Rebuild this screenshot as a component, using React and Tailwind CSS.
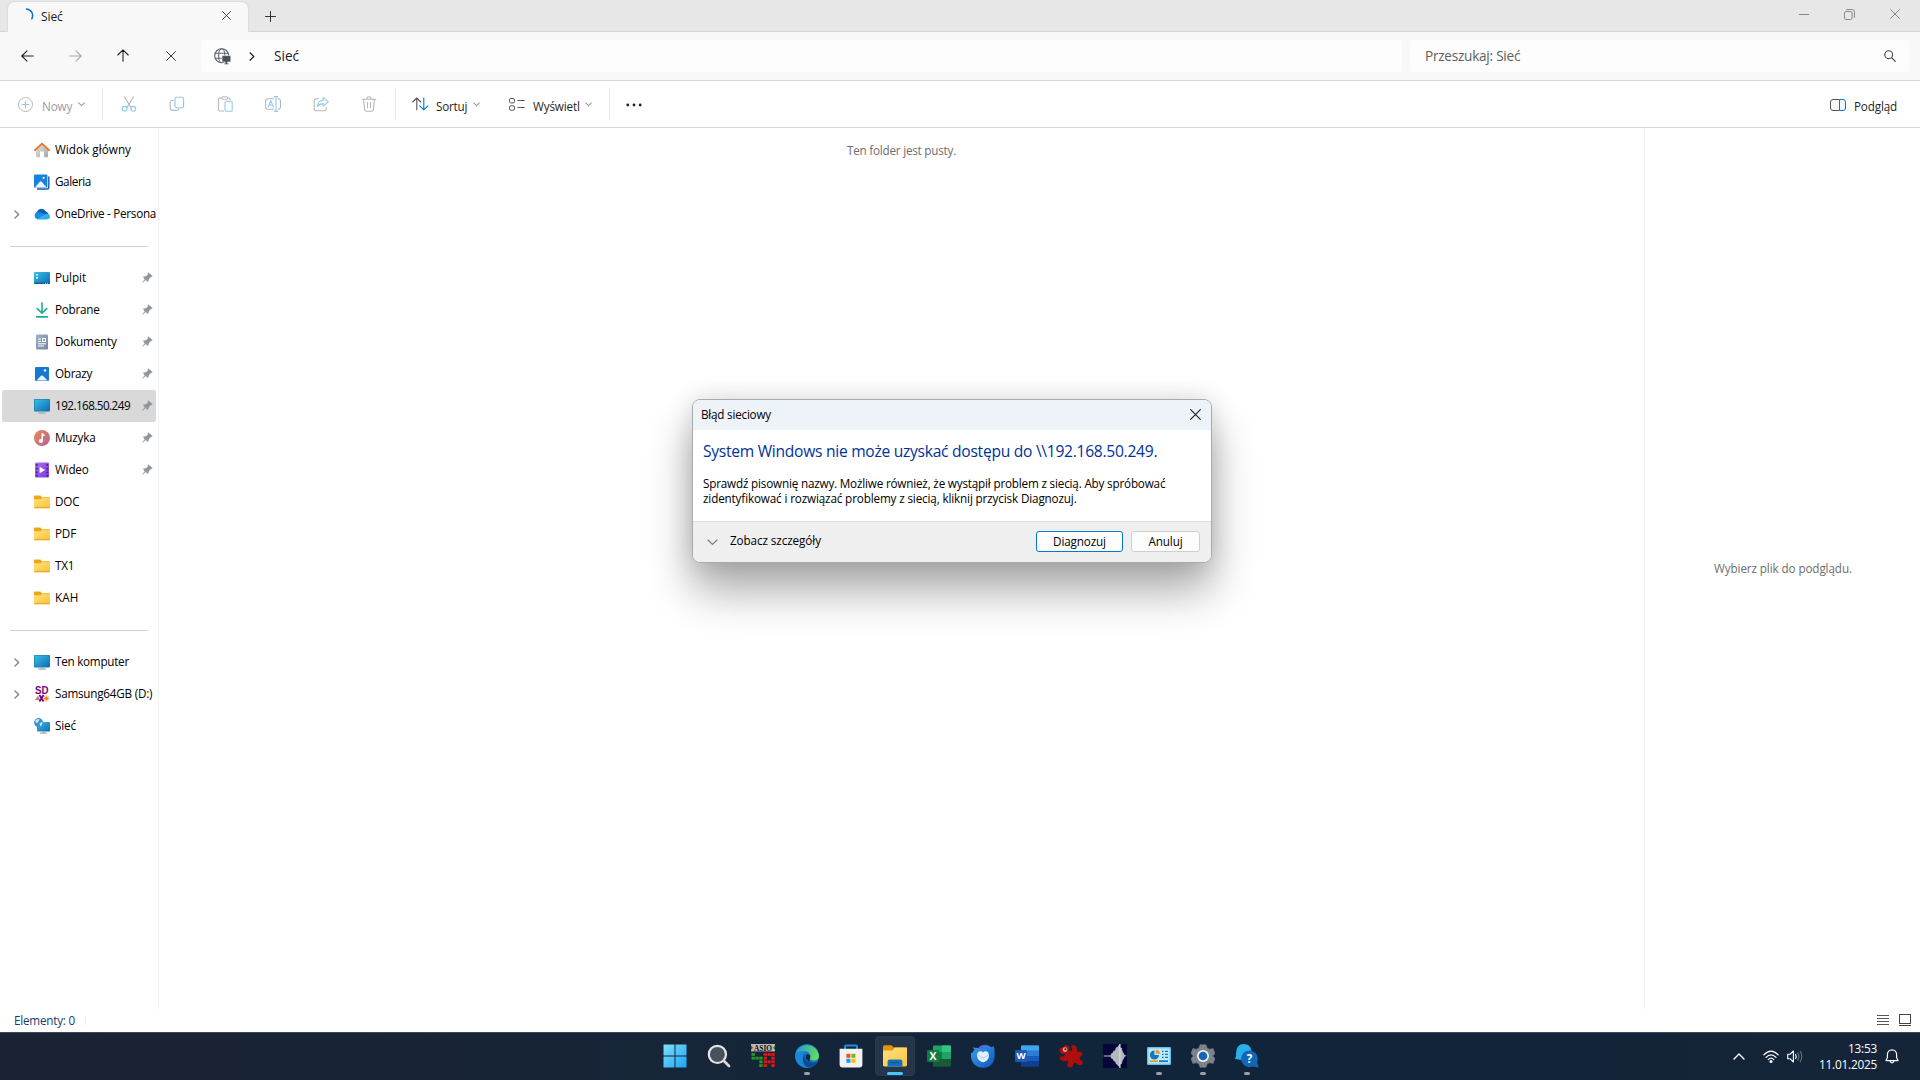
const stroke = { fill: "none", strokeLinecap: "round", strokeLinejoin: "round" };

function Cross({ size = 10, color = "#333", className = "" }) {
  return (
    <svg width={size} height={size} viewBox="0 0 10 10" className={className}>
      <path d="M.6 .6 9.4 9.4M9.4 .6 .6 9.4" stroke={color} strokeWidth="1" {...stroke} />
    </svg>
  );
}

function ChevronDown({ className = "" }) {
  return (
    <svg width="7" height="5" viewBox="0 0 7 5" className={className}>
      <path d="M.7 .9 3.5 3.7 6.3 .9" stroke="#9a9a9a" strokeWidth="1.1" {...stroke} />
    </svg>
  );
}

function TitleBar() {
  return (
    <div className="flex h-8 shrink-0 border-b border-[#d5d5d5] bg-[#e7e7e7]">
      <div className="relative ml-[7px] mt-px flex h-[31px] w-[242px] shrink-0 rounded-t-lg border border-b-0 border-[#dcdcdc] bg-[#f8f8f8]">
        <svg width="9" height="12" viewBox="0 0 9 12" className="ml-[17px] mt-[6px]">
          <path d="M1.5 1C6.5 1.6 9 6.4 6.8 10.8" stroke="#0a6fc2" strokeWidth="1.5" {...stroke} />
        </svg>
        <span className="ml-[7px] mt-[6px] text-[12px] leading-[18px] tracking-[-0.1px] text-[#1a1a1a]">Sieć</span>
        <Cross size={9} className="ml-auto mr-[17px] mt-[9px]" />
      </div>
      <svg width="11" height="11" viewBox="0 0 11 11" className="ml-4 mt-[11px]">
        <path d="M5.5 .5V10.5M.5 5.5H10.5" stroke="#333" strokeWidth="1" {...stroke} />
      </svg>
      <div className="ml-auto mr-[2px] flex h-[29px] items-center">
        <div className="flex w-[45px] justify-center">
          <svg width="10" height="10" viewBox="0 0 10 10"><path d="M0 4.5H10" stroke="#888" /></svg>
        </div>
        <div className="flex w-[46px] justify-center">
          <svg width="11" height="11" viewBox="0 0 11 11" className="mt-[-1px]">
            <rect x=".5" y="2.5" width="7.5" height="8" rx="1.4" fill="none" stroke="#888" />
            <path d="M2.5 .5H8.2Q10.4 .5 10.4 2.8V8.4" stroke="#888" {...stroke} />
          </svg>
        </div>
        <div className="flex w-[46px] justify-center"><Cross size={10} color="#888" className="mt-[-1px]" /></div>
      </div>
    </div>
  );
}

function NavBar() {
  return (
    <div className="flex h-[49px] shrink-0 items-center border-b border-[#d5d5d5] bg-[#f8f8f8] pl-[3px]">
      <div className="mt-[-1px] flex items-center">
        <div className="flex w-12 justify-center">
          <svg width="13" height="12" viewBox="0 0 13 12"><path d="M12.3 6H.8M6 .8.8 6 6 11.2" stroke="#222" strokeWidth="1.1" {...stroke} /></svg>
        </div>
        <div className="flex w-12 justify-center">
          <svg width="13" height="12" viewBox="0 0 13 12"><path d="M.7 6H12.2M7 .8 12.2 6 7 11.2" stroke="#aaa" strokeWidth="1.1" {...stroke} /></svg>
        </div>
        <div className="flex w-12 justify-center pr-px">
          <svg width="12" height="13" viewBox="0 0 12 13"><path d="M6 12.3V.8M.8 6 6 .8 11.2 6" stroke="#222" strokeWidth="1.1" {...stroke} /></svg>
        </div>
        <div className="flex w-12 justify-center pr-px"><Cross size={10} /></div>
      </div>
      <div className="ml-[6px] flex h-8 w-[1201px] items-center rounded-[4px] bg-[#fdfdfd]">
        <svg width="17" height="17" viewBox="0 0 17 17" className="ml-[13px]">
          <g fill="none" stroke="#606468" strokeWidth="1.1">
            <circle cx="7.7" cy="7.7" r="7" />
            <ellipse cx="7.7" cy="7.7" rx="3.1" ry="7" />
            <path d="M1.3 5.2H14.1M1.3 10.2H14.1" />
          </g>
          <path d="M8 7.6H16.8V14H13.6V15.2H15V16.4H10V15.2H11.2V14H8Z" fill="#4d5155" stroke="#fdfdfd" strokeWidth=".6" />
        </svg>
        <svg width="6" height="9" viewBox="0 0 6 9" className="ml-[18px]"><path d="M1 .8 4.8 4.5 1 8.2" stroke="#222" strokeWidth="1.2" {...stroke} /></svg>
        <span className="ml-[19px] text-[13.6px] leading-5 text-[#1a1a1a]">Sieć</span>
      </div>
      <div className="ml-2 flex h-8 w-[499px] items-center justify-between rounded-[4px] bg-[#fdfdfd] pl-[15px] pr-[13px]">
        <span className="text-[13.6px] leading-5 tracking-[-0.25px] text-[#606060]">Przeszukaj: Sieć</span>
        <svg width="12" height="12" viewBox="0 0 12 12"><circle cx="4.7" cy="4.7" r="3.9" fill="none" stroke="#444" strokeWidth="1.1" /><path d="M7.6 7.6 11.3 11.3" stroke="#444" strokeWidth="1.2" strokeLinecap="round" /></svg>
      </div>
    </div>
  );
}

function Tool({ children }) {
  return (
    <div className="flex w-12 justify-center">
      <svg width="16" height="16" viewBox="0 0 16 16" fill="none" stroke="#b8b8b8" strokeWidth="1.1" strokeLinecap="round" strokeLinejoin="round">{children}</svg>
    </div>
  );
}

const BL = "#91c8f0";

function Toolbar() {
  return (
    <div className="flex h-[47px] shrink-0 items-center border-b border-[#d5d5d5] bg-white text-[11.7px] text-[#1f1f1f]">
      <svg width="15" height="15" viewBox="0 0 15 15" className="ml-[18px]">
        <circle cx="7.5" cy="7.5" r="7" fill="none" stroke="#b8b8b8" />
        <path d="M7.5 4V11M4 7.5H11" stroke={BL} strokeWidth="1.1" {...stroke} />
      </svg>
      <span className="ml-[9px] mt-[5px] w-[30px] whitespace-nowrap tracking-[-0.12px] text-[#9a9a9a]">Nowy</span>
      <ChevronDown className="ml-[6px] mr-px mt-px" />
      <div className="ml-4 h-8 w-px bg-[#e8e8e8]" />
      <div className="ml-[2px] flex">
        <Tool>
          <path d="M3.3 .8 10 11.4M12.7 .8 6 11.4" />
          <circle cx="3.7" cy="12.8" r="2.4" stroke={BL} /><circle cx="12.3" cy="12.8" r="2.4" stroke={BL} />
        </Tool>
        <Tool>
          <path d="M4.3 4.5H3Q1.2 4.5 1.2 6.5V12Q1.2 14.4 3.6 14.4H7.5Q9.5 14.4 9.7 12.7" />
          <rect x="6" y="1.3" width="8.6" height="10.4" rx="1.6" stroke={BL} />
        </Tool>
        <Tool>
          <path d="M5 2H3Q1.4 2 1.4 3.6V13.4Q1.4 15 3 15H6.5M10.5 2H11.4Q13 2 13 3.6V4" />
          <rect x="4.8" y=".7" width="5.8" height="2.6" rx="1.2" />
          <rect x="8" y="5.3" width="7.2" height="10" rx="1.4" stroke={BL} />
        </Tool>
        <Tool>
          <path d="M8.7 2.8H2.8Q.6 2.8 .6 5V11Q.6 13.2 2.8 13.2H8.7M13 2.8Q15.5 2.8 15.5 5V11Q15.5 13.2 13 13.2" />
          <path d="M11 .6V15.4M9.3 .6H12.7M9.3 15.4H12.7M3.2 11 5.8 4.6 8.4 11M4.1 9H7.5" stroke={BL} />
        </Tool>
        <Tool>
          <path d="M5.4 2.8H3.6Q1.2 2.8 1.2 5.2V12.4Q1.2 14.8 3.6 14.8H10.8Q13.2 14.8 13.2 12.4V11.6" />
          <path d="M10.2 1.4 15.4 5.8 10.2 10.2V7.6Q6.4 7.6 4.4 10.4Q5 4.4 10.2 4.2Z" stroke={BL} />
        </Tool>
        <Tool>
          <path d="M1.2 3.2H14.8M5.8 3.2Q5.8 .8 8 .8T10.2 3.2M2.6 3.2 3.6 13.4Q3.8 15.3 5.4 15.3H10.6Q12.2 15.3 12.4 13.4L13.4 3.2M6.5 6.6V11.6M9.5 6.6V11.6" />
        </Tool>
      </div>
      <div className="ml-[2px] h-8 w-px bg-[#e8e8e8]" />
      <svg width="17" height="14" viewBox="0 0 17 14" className="ml-4">
        <path d="M4.8 12.8V1M.7 5 4.8 1 8.8 5" stroke="#555" strokeWidth="1.1" {...stroke} />
        <path d="M11.8 1V12.8M7.7 8.8 11.8 12.8 15.9 8.8" stroke="#0078d4" strokeWidth="1.1" {...stroke} />
      </svg>
      <span className="ml-[7px] mt-[5px] w-[31px] whitespace-nowrap tracking-[-0.22px]">Sortuj</span>
      <ChevronDown className="ml-[6px] mr-px mt-px" />
      <svg width="16" height="13" viewBox="0 0 16 13" className="ml-7">
        <g fill="none" stroke="#555"><rect x=".5" y=".5" width="5" height="4.4" rx="1.3" /><rect x=".5" y="7.8" width="5" height="4.4" rx="1.3" /><path d="M8.5 2.5H15.7M8.5 9.5H15.7" /></g>
      </svg>
      <span className="ml-2 mt-[5px] w-[47px] whitespace-nowrap tracking-[-0.12px]">Wyświetl</span>
      <ChevronDown className="ml-[5px] mr-px mt-px" />
      <div className="ml-4 h-8 w-px bg-[#e8e8e8]" />
      <svg width="16" height="4" viewBox="0 0 16 4" className="ml-4 mt-[2px]"><g fill="#222"><circle cx="1.8" cy="2" r="1.4" /><circle cx="8" cy="2" r="1.4" /><circle cx="14.2" cy="2" r="1.4" /></g></svg>
      <svg width="16" height="12" viewBox="0 0 16 12" className="ml-auto mt-px">
        <path d="M9.5 .5H3Q.5 .5 .5 3V9Q.5 11.5 3 11.5H9.5" fill="#f7f7f7" stroke="#555" />
        <path d="M9.5 .5H13Q15.5 .5 15.5 3V9Q15.5 11.5 13 11.5H9.5Z" fill="#f2f9ff" stroke="#0078d4" />
      </svg>
      <span className="ml-2 mr-[23px] mt-[5px] w-[43px] whitespace-nowrap tracking-[-0.17px]">Podgląd</span>
    </div>
  );
}

function Monitor() {
  return (
    <>
      <rect y="1" width="16" height="12.4" rx=".8" fill="#1673a8" />
      <rect x=".6" y="1.6" width="14.8" height="11.2" rx=".4" fill="url(#screen)" />
      <path d="M6.5 13.4H9.5V14.6H12V15.8H4V14.6H6.5Z" fill="#a9b1b8" />
    </>
  );
}

function Folder() {
  return (
    <>
      <path d="M0 2.6Q0 1.4 1.2 1.4H6.2L8.2 3.2H15Q16 3.2 16 4.2V8H0Z" fill="#f0a810" />
      <path d="M0 5.2H6.6L8.2 4H16V13.2Q16 14.2 15 14.2H1Q0 14.2 0 13.2Z" fill="url(#folder)" />
      <path d="M.3 13.7H15.7" stroke="#e3a21a" />
    </>
  );
}

const icons = {
  home: (
    <>
      <path d="M2 7 8 1.8 14 7V14.2Q14 15.2 13 15.2H10V9.6H6V15.2H3Q2 15.2 2 14.2Z" fill="url(#house)" />
      <path d="M.9 8.2 8 1.6 15.1 8.2" stroke="#e8782a" strokeWidth="1.9" {...stroke} />
    </>
  ),
  gallery: (
    <>
      <path d="M14.8 2.5V13.4Q14.8 15 13.2 15H3" stroke="#0f5ea8" strokeWidth="1.4" fill="none" />
      <rect x="0" y=".4" width="13.4" height="13.4" rx="1" fill="#1782dc" />
      <path d="M.8 13.4 5.8 7.8Q6.7 6.9 7.6 7.8L12.8 13.4Z" fill="#e9f5ff" /><circle cx="9.6" cy="3.8" r="1.1" fill="#fff" />
    </>
  ),
  cloud: (
    <>
      <path d="M3.6 12.6A3.8 3.8 0 0 1 3 5.8 5 5 0 0 1 12 5.5 4 4 0 0 1 13 12.6Z" fill="#0f5fb4" />
      <path d="M3.4 13.2A3.5 3.5 0 0 1 3.2 6.4Q6 5.8 8.6 7.6L15 10.4 13.2 13.2Z" fill="#1490df" />
      <path d="M3 13.2 11.4 7.9Q15.8 7.2 16 10.4 15.8 13 13 13.2Z" fill="#2fb0ec" />
    </>
  ),
  desktop: (
    <>
      <rect y="2" width="16" height="12" rx="1" fill="url(#screen)" />
      <path d="M2 4H4V5.6H2ZM2 7H4V8.6H2Z" fill="#fff" /><path d="M0 12.6H16V13Q16 14 15 14H1Q0 14 0 13Z" fill="#0e639c" />
      <path d="M11 13.3H12M13 13.3H14" stroke="#fff" strokeWidth=".7" />
    </>
  ),
  download: (
    <path d="M8 .8V11M3.2 6.6 8 11.2 12.8 6.6M2.6 14.9H13.6" stroke="#1fae8b" strokeWidth="1.6" {...stroke} />
  ),
  docs: (
    <>
      <rect x="2" y=".4" width="12" height="15.2" rx="1" fill="url(#doc)" />
      <path d="M4 5H7M4 7.4H7M4 9.8H12M4 12H10" stroke="#fff" strokeWidth="1" /><rect x="8.5" y="4.5" width="3" height="3" fill="#8fa4c4" stroke="#fff" />
    </>
  ),
  pictures: (
    <>
      <rect x="1" y="1" width="14" height="14" rx="1" fill="#1379d2" />
      <path d="M2.4 14.4 7 9.8Q7.9 9 8.8 9.8L13.6 14.4Z" fill="#eaf6ff" /><circle cx="11" cy="4.4" r="1.2" fill="#fff" />
    </>
  ),
  pc: <Monitor />,
  music: (
    <>
      <circle cx="8" cy="8" r="8" fill="url(#music)" />
      <circle cx="6.8" cy="11" r="2.1" fill="#fff" /><path d="M8.2 11V3.4Q9 5.2 10.8 5.6" stroke="#fff" strokeWidth="1.4" fill="none" />
    </>
  ),
  video: (
    <>
      <rect x="1" y=".4" width="14" height="15.2" rx="1" fill="url(#video)" />
      <path d="M2.8 2V14.4M13.2 2V14.4" stroke="#48208e" strokeWidth="1.8" strokeDasharray="1.8 1.9" /><path d="M5.6 4.8 11 8 5.6 11.2Z" fill="#fff" />
    </>
  ),
  folder: <Folder />,
  sd: (
    <>
      <text x="7.8" y="7.8" textAnchor="middle" fontSize="10.5" fontWeight="700" fill="#7a007a" fontFamily="Liberation Sans, sans-serif" textLength="13.5" lengthAdjust="spacingAndGlyphs">SD</text>
      <path d="M1 14 4 9.8 6.4 14Z" fill="#a08c78" />
      <path d="M5.4 9 9.6 15.6M9.6 9 5.4 15.6" stroke="#7a007a" strokeWidth="1.8" />
      <path d="M12.2 9.4V15.4M9.4 12.4H15M10.2 10.4 14.2 14.4M14.2 10.4 10.2 14.4" stroke="#f07a1e" strokeWidth="1" />
    </>
  ),
  network: (
    <>
      <rect x="3" y="4" width="13" height="9.4" rx=".6" fill="url(#screen)" />
      <path d="M8 13.4H11V14.6H13V15.8H6V14.6H8Z" fill="#a9b1b8" />
      <circle cx="4.6" cy="4.6" r="4.5" fill="#3c8fd0" /><path d="M1 3Q3 .4 5.6 1.2L4 4.4 2.4 5ZM5.6 5 8.6 4Q8.6 7 6 8.4Z" fill="#c4e6f6" />
    </>
  ),
};

function Item({ icon, label, pin, arrow, active, track = "tracking-[-0.18px]" }) {
  return (
    <div className={`ml-[2px] flex h-8 w-[154px] items-center rounded-[2px] ${active ? "bg-[#d9d9d9]" : ""}`}>
      <div className="flex w-8 shrink-0 pl-3">
        {arrow && <svg width="6" height="9" viewBox="0 0 6 9"><path d="M1 1 4.7 4.5 1 8" stroke="#8b8b8b" strokeWidth="1.5" {...stroke} /></svg>}
      </div>
      <svg width="16" height="16" viewBox="0 0 16 16" className="shrink-0 overflow-visible">{icons[icon]}</svg>
      <span className={`ml-[5px] shrink-0 whitespace-nowrap text-[11.7px] text-black ${track}`}>{label}</span>
      {pin && (
        <svg width="11" height="11" viewBox="0 0 11 11" className="ml-auto mr-[3px] mt-[-1px] shrink-0">
          <path d="M6.6 .4 10.6 4.2 9.6 5 8.6 5.2 6.8 7.2 6.4 9.6 5.4 9.8 3.7 8.1.6 10.7.2 10.3 2.8 7.2 1.2 5.6 1.5 4.5 4 4.2 5.8 2.4 5.8 1.2Z" fill="#8f979e" />
        </svg>
      )}
    </div>
  );
}

const Rule = () => (
  <div className="flex h-8 items-center pl-[10px]"><div className="h-px w-[138px] bg-[#cfcfcf]" /></div>
);

function Sidebar() {
  return (
    <div className="w-[159px] shrink-0 border-r border-[#f2f2f2] pt-[6px]">
      <Item icon="home" label="Widok główny" track="tracking-[0.04px]" />
      <Item icon="gallery" label="Galeria" track="tracking-[-0.4px]" />
      <Item icon="cloud" label="OneDrive - Persona" arrow track="tracking-[-0.27px]" />
      <Rule />
      <Item icon="desktop" label="Pulpit" pin track="tracking-[-0.06px]" />
      <Item icon="download" label="Pobrane" pin track="tracking-[-0.25px]" />
      <Item icon="docs" label="Dokumenty" pin />
      <Item icon="pictures" label="Obrazy" pin track="tracking-[-0.3px]" />
      <Item icon="pc" label="192.168.50.249" pin active track="tracking-[-0.55px]" />
      <Item icon="music" label="Muzyka" pin />
      <Item icon="video" label="Wideo" pin />
      <Item icon="folder" label="DOC" />
      <Item icon="folder" label="PDF" />
      <Item icon="folder" label="TX1" />
      <Item icon="folder" label="KAH" track="tracking-[0.05px]" />
      <Rule />
      <Item icon="pc" label="Ten komputer" arrow track="tracking-[-0.26px]" />
      <Item icon="sd" label="Samsung64GB (D:)" arrow track="tracking-[-0.23px]" />
      <Item icon="network" label="Sieć" track="tracking-[-0.15px]" />
    </div>
  );
}

function Dialog() {
  return (
    <div className="absolute left-[692px] top-[399px] flex h-[164px] w-[520px] flex-col overflow-hidden rounded-lg border border-[#a8abae] bg-white text-[11.7px] text-black shadow-[0_28px_44px_rgba(0,0,0,0.33),0_0_26px_rgba(0,0,0,0.13)]">
      <div className="flex h-[30px] items-center justify-between bg-[#eef3fa] pl-2 pr-[10px]">
        <span className="tracking-[-0.22px]">Błąd sieciowy</span>
        <Cross size={11} color="#1a1a1a" className="mt-[-1px]" />
      </div>
      <div className="flex h-[91px] flex-col pl-[10px] pt-[11px]">
        <span className="whitespace-nowrap text-[15.6px] leading-5 tracking-[-0.27px] text-[#003399]">System Windows nie może uzyskać dostępu do \\192.168.50.249.</span>
        <span className="mt-[15px] whitespace-nowrap leading-[15px] tracking-[-0.183px]">Sprawdź pisownię nazwy. Możliwe również, że wystąpił problem z siecią. Aby spróbować</span>
        <span className="whitespace-nowrap leading-[15px] tracking-[-0.142px]">zidentyfikować i rozwiązać problemy z siecią, kliknij przycisk Diagnozuj.</span>
      </div>
      <div className="flex h-[41px] border-t border-[#dfdfdf] bg-[#efefef]">
        <svg width="11" height="7" viewBox="0 0 11 7" className="ml-[14px] mt-[17px]"><path d="M1 1 5.5 5.4 10 1" stroke="#777" strokeWidth="1.1" {...stroke} /></svg>
        <span className="ml-3 mt-[9px] leading-[18px] tracking-[-0.09px]">Zobacz szczegóły</span>
        <div className="ml-auto mr-[11px] mt-[9px] flex gap-2">
          <button className="flex h-[21px] w-[87px] items-center justify-center rounded-[3px] border border-[#0078d4] bg-[#fdfdfd] tracking-[-0.13px]">Diagnozuj</button>
          <button className="flex h-[21px] w-[69px] items-center justify-center rounded-[3px] border border-[#d0d0d0] bg-[#fdfdfd] tracking-[-0.1px]">Anuluj</button>
        </div>
      </div>
    </div>
  );
}

function StatusBar() {
  return (
    <div className="flex h-[23px] shrink-0 items-center bg-white pl-[14px] pr-[9px]">
      <span className="w-[71px] text-[11.7px] tracking-[-0.22px] text-[#1a3a6c]">Elementy: 0</span>
      <div className="h-[11px] w-px bg-[#f2f2f2]" />
      <svg width="12" height="11" viewBox="0 0 12 11" className="ml-auto"><path d="M0 .5H12M0 3.5H12M0 6.5H12M0 9.5H12" stroke="#555" /></svg>
      <svg width="12" height="12" viewBox="0 0 12 12" className="ml-[10px] mt-[-1px]"><rect x=".5" y=".5" width="11" height="9" fill="none" stroke="#444" /><path d="M0 11.5H12" stroke="#444" /></svg>
    </div>
  );
}

const asioFour = [[0, 0], [0, 1], [1, 1], [2, 1], [2, 2], [2, 3]];
const asioA = [[0, 0], [1, 0], [2, 0], [0, 1], [2, 1], [0, 2], [1, 2], [2, 2], [0, 3], [2, 3]];

const apps = [
  { art: <path d="M.5 .5H11.5V11.5H.5ZM12.5 .5H23.5V11.5H12.5ZM.5 12.5H11.5V23.5H.5ZM12.5 12.5H23.5V23.5H12.5Z" fill="url(#win)" /> },
  { art: <><circle cx="10.4" cy="10.4" r="8.6" fill="#46535f" stroke="#e4e4e4" strokeWidth="2.2" /><path d="M17 17 22 22" stroke="#d8d8d8" strokeWidth="2.8" strokeLinecap="round" /></> },
  { art: (
    <>
      <rect x="0" y="0" width="24" height="7.4" fill="#b9b9b9" /><path d="M0 1.5 2 3.7 0 6Z" fill="#e01010" /><path d="M24 1.5 22 3.7 24 6Z" fill="#109020" />
      <text x="12" y="6.7" textAnchor="middle" fontSize="8.5" fontWeight="700" fontFamily="Liberation Serif, serif" textLength="18" lengthAdjust="spacingAndGlyphs" fill="#111">ASIO</text>
      <g fill="#1f9a26">{asioFour.map(([x, y]) => <rect key={`${x}${y}`} x={.5 + x * 3.9} y={9 + y * 3.7} width="3.3" height="2.9" />)}</g>
      <g fill="#e01616">{asioA.map(([x, y]) => <rect key={`${x}${y}`} x={12.6 + x * 3.9} y={9 + y * 3.7} width="3.3" height="2.9" />)}</g>
    </>
  ) },
  { run: true, art: (
    <>
      <circle cx="12" cy="12" r="12" fill="#1673c8" />
      <path d="M.3 10.6A12 12 0 0 1 23.9 11C24.6 15.6 20 17.4 16 16 14.4 15.4 14.6 14.6 15.2 13.6 16.6 10 13 7.2 9 7.2 5 7.2 1.6 8.8 .3 10.6Z" fill="url(#edge)" />
      <path d="M.2 11.4C2 7.8 7.4 6.6 10.6 7.8 8 8.6 6.8 12 7.8 15.4 9 19.4 12.6 21.4 17.2 22.8A12 12 0 0 1 .2 11.4Z" fill="#1b87d8" />
      <path d="M9.8 10.2C8.4 13.4 11.4 18.4 17.6 18.6 19.8 18.6 21.4 18 22.4 17.6 20.6 21.4 17 23.4 14 23.8 7.6 22.6 6 13.6 9.8 10.2Z" fill="#0c4a94" />
      <path d="M11.4 10.8C9.8 13 11.4 17.2 15.8 17.8 14 16.6 14.4 15.2 15.2 13.8 15.6 11.4 13.4 9.4 11.4 10.8Z" fill="#12263c" />
    </>
  ) },
  { art: (
    <>
      <path d="M6 5.6V2.4Q6 1.4 7 1.4H17Q18 1.4 18 2.4V5.6" fill="none" stroke="#1b8fe0" strokeWidth="2" />
      <path d="M.6 4.8H23.4V20.6Q23.4 23.6 20.4 23.6H3.6Q.6 23.6 .6 20.6Z" fill="#f1f1f1" />
      <path d="M7.4 9.8H11.4V13.8H7.4Z" fill="#f25022" /><path d="M12.4 9.8H16.4V13.8H12.4Z" fill="#7fba00" /><path d="M7.4 14.8H11.4V18.8H7.4Z" fill="#00a4ef" /><path d="M12.4 14.8H16.4V18.8H12.4Z" fill="#ffb900" />
    </>
  ) },
  { active: true, art: (
    <>
      <path d="M0 3Q0 1.2 1.6 1.2H8.4L10.8 3.6H22.6Q24 3.6 24 5V9H0Z" fill="#e3940a" />
      <path d="M0 6.4H9.6L11.6 3.4H24V21Q24 22.4 22.6 22.4H1.4Q0 22.4 0 21Z" fill="url(#folder)" />
      <path d="M4.6 22.4V17.4Q4.6 15.4 6.6 15.4H17.4Q19.4 15.4 19.4 17.4V22.4Z" fill="#1272bd" /><path d="M7.6 17.8H16.4V19.2H7.6Z" fill="#0d579a" />
    </>
  ) },
  { art: (
    <>
      <rect x="6" y="1.4" width="18" height="20.8" rx="1" fill="#21a366" /><path d="M15 1.4H23Q24 1.4 24 2.4V8H15Z" fill="#33c481" /><path d="M6 8H15V15H6Z" fill="#107c41" /><path d="M6 15H24V21.2Q24 22.2 23 22.2H7Q6 22.2 6 21.2Z" fill="#185c37" />
      <rect x="0" y="6" width="12" height="12" rx="1" fill="#107c41" />
      <text x="6" y="15.6" textAnchor="middle" fontSize="10.5" fontWeight="700" fill="#fff">X</text>
    </>
  ) },
  { art: (
    <>
      <path d="M1.6 3.4 3.6 5.8Q1.8 7.4 1.6 9L.2 8.4Q-1 14.4 2.2 19 5.6 23.8 12 23.8 18 23.8 21.4 19.4 24.4 15.4 23.6 9.4 24 5.4 22.6 2L20.6 3.2Q17 .4 12.4 1 9 1.6 7.2 4Z" fill="url(#bird)" />
      <path d="M8.4 4Q10.6 .2 16 .8 12.4 2.6 10.6 5.4Z" fill="#6a58d6" />
      <path d="M6 11Q6.4 7.4 9.4 7.2 11 7.2 12 8.4 13 7.2 14.6 7.2 17.6 7.4 18 11 18 15 15 17 13.4 18.2 12 18.2 10.6 18.2 9 17 6 15 6 11Z" fill="#e3f0fd" />
      <path d="M6.6 10.2Q9.6 14 12 14T17.4 10.2" fill="none" stroke="#9cc6f0" strokeWidth=".9" />
    </>
  ) },
  { art: (
    <>
      <rect x="6" y="1.4" width="18" height="20.8" rx="1" fill="#2b7cd3" /><path d="M6 2.4Q6 1.4 7 1.4H23Q24 1.4 24 2.4V6.6H6Z" fill="#41a5ee" /><path d="M6 12H24V17H6Z" fill="#185abd" /><path d="M6 17H24V21.2Q24 22.2 23 22.2H7Q6 22.2 6 21.2Z" fill="#103f91" />
      <rect x="0" y="6" width="12" height="12" rx="1" fill="#185abd" />
      <text x="6" y="15.3" textAnchor="middle" fontSize="9.5" fontWeight="700" fill="#fff">W</text>
    </>
  ) },
  { art: (
    <>
      <path d="M1.4 4.6 4.6 3.6 7 1.4 9.6 3 10 8 13.4 7 14 4.4 12.8 2.6 15 1.4 17.4 4 18 8.6 21.6 8.4 23.2 10.6 20 13 20.4 16 23.4 17.6 22.6 20.4 19.4 20.4 17 18 14.6 18.8 12.6 22.8 8.8 22.4 9.6 18.6 9.4 15.4 5.4 17 1.4 15.2 1.8 13 5 13 8 10 3.6 9.4 1 7.6Z" fill="#ad0e0e" stroke="#ad0e0e" strokeWidth="1.2" strokeLinejoin="round" />
      <circle cx="6" cy="5.6" r="2.3" fill="#d9b0a6" /><circle cx="6.4" cy="5.2" r="1" fill="#331111" />
    </>
  ) },
  { art: (
    <>
      <rect width="24" height="24" fill="#04063a" />
      <path d="M.8 11.4H7.4L8.4 9.4 9.6 8.8 10.8 6.6 12 6.4 13 3.6 14.4 3 15.4 1.4 16.4 1V0H17.4V3.4L18.8 4 19.6 7.6 20.8 9.4 21.6 11 23.6 11.8 21.6 12.8 20.8 14.6 19.6 16.4 18.8 19.8 17.4 20.6V24H16.4V22.8L15 22 14 20.4 13 20 12 17.4 10.8 17.2 9.6 15 8.4 14.4 7.4 12.4H.8Z" fill="#b5b8be" />
      <path d="M16.9 0V24" stroke="#e6e6e6" strokeWidth=".8" />
    </>
  ) },
  { run: true, art: (
    <>
      <rect x="0" y="3" width="24" height="18" rx="1.2" fill="#5cc3f2" /><rect x="1.4" y="4.4" width="21.2" height="15.2" fill="#bfe9fb" />
      <path d="M7.4 6.4A4.6 4.6 0 1 0 12 11H7.4Z" fill="#1677be" /><path d="M8.8 5.6V9.8H13A4.2 4.2 0 0 0 8.8 5.6Z" fill="#f39a1e" />
      <path d="M15 7.4H16.6M15 10.4H16.6M15 13.4H16.6M18 7.4H21M18 10.4H21M18 13.4H21" stroke="#1677be" strokeWidth="1.2" />
      <path d="M2.6 17.2H11" stroke="#f39a1e" strokeWidth="1.8" /><path d="M12 17.2H21" stroke="#1677be" strokeWidth="1.8" />
    </>
  ) },
  { run: true, art: (
    <>
      <path d="M9 .8H15L16 4 18.8 5.4 22 4.4 24 9.4 21.6 12 24 14.6 22 19.6 18.8 18.6 16 20 15 23.2H9L8 20 5.2 18.6 2 19.6 0 14.6 2.4 12 0 9.4 2 4.4 5.2 5.4 8 4Z" fill="#7d838b" stroke="#7d838b" strokeWidth=".6" strokeLinejoin="round" />
      <circle cx="12" cy="12" r="6" fill="#f2f2f2" /><circle cx="12" cy="12" r="4.3" fill="#1267b4" />
    </>
  ) },
  { run: true, art: (
    <>
      <path d="M0 15Q1.6 12.6 1 9.6 1 0 9 0 15.6 .2 16.4 7L8 16.4Q4 15.4 0 15Z" fill="#27b1e8" />
      <circle cx="14.4" cy="14.8" r="8.4" fill="#1066b8" /><path d="M17 22.4 23.8 23.6 21.6 17Z" fill="#1066b8" />
      <text x="14.6" y="19" textAnchor="middle" fontSize="11.5" fontWeight="700" fill="#fff">?</text>
    </>
  ) },
];

function Taskbar() {
  return (
    <div className="flex h-12 shrink-0 border-t border-[#3f4a56] bg-[linear-gradient(90deg,#1a2333,#172538_35%,#10243a_55%,#11243a_75%,#152438)] text-white">
      <div className="ml-[653px] flex">
        {apps.map((a, i) => (
          <div key={i} className="flex w-11 justify-center">
            <div className={`mt-[3px] flex h-10 w-10 flex-col items-center rounded-[4px] ${a.active ? "border border-[#2b3b4d] bg-[#25364a]" : "border border-transparent"}`}>
              <svg width="24" height="24" viewBox="0 0 24 24" className="mt-[7px] shrink-0">{a.art}</svg>
              {a.run && <div className="mt-1 h-[3px] w-[6px] shrink-0 rounded-full bg-[#9aa0a6]" />}
              {a.active && <div className="mt-1 h-[3px] w-4 shrink-0 rounded-full bg-[#4cc2ff]" />}
            </div>
          </div>
        ))}
      </div>
      <div className="ml-auto mr-[21px] flex h-full items-center">
        <svg width="12" height="7" viewBox="0 0 12 7" className="mt-[-1px]"><path d="M1 6 6 1 11 6" stroke="#fff" strokeWidth="1.4" {...stroke} /></svg>
        <svg width="16" height="13" viewBox="0 0 16 13" className="ml-[18px] mt-[-1px]">
          <path d="M.8 4.8Q8-2.6 15.2 4.8M3 7.4Q8 2.2 13 7.4M5.2 9.6Q8 6.8 10.8 9.6" stroke="#fff" strokeWidth="1.2" {...stroke} /><circle cx="8" cy="11.4" r="1.5" fill="#fff" />
        </svg>
        <svg width="17" height="13" viewBox="0 0 17 13" className="ml-2 mt-[-1px]">
          <path d="M.7 4.3H3L6.4 1V12L3 8.7H.7Z" stroke="#fff" strokeWidth="1.1" {...stroke} />
          <path d="M8.6 4.4Q9.8 6.5 8.6 8.6" stroke="#fff" strokeWidth="1.1" {...stroke} />
          <path d="M10.8 2.8Q13 6.5 10.8 10.2M13.2 1.2Q16.4 6.5 13.2 11.8" stroke="#66727f" strokeWidth="1.1" {...stroke} />
        </svg>
        <div className="ml-[14px] mt-[-2px] flex w-[59px] flex-col items-end whitespace-nowrap text-[11.8px] leading-4 tracking-[-0.22px]">
          <span>13:53</span>
          <span>11.01.2025</span>
        </div>
        <svg width="14" height="15" viewBox="0 0 14 15" className="ml-2 mt-[-1px]">
          <path d="M1 11.6 2.4 8.6V5.4A4.6 4.6 0 0 1 11.6 5.4V8.6L13 11.6ZM5.2 12Q5.4 13.8 7 13.8T8.8 12" stroke="#fff" strokeWidth="1.2" {...stroke} />
        </svg>
      </div>
    </div>
  );
}

function Gradients() {
  const defs = [
    ["screen", "#35c3e0", "#1268bd"],
    ["folder", "#ffe084", "#f9c536"],
    ["house", "#e6e6e6", "#a9a9ad"],
    ["doc", "#9fb0c6", "#7488a4"],
    ["music", "#ee8a54", "#b2619c"],
    ["video", "#b06cf0", "#7c3bdc"],
    ["win", "#7fe0fb", "#1ba3f4"],
    ["edge", "#2292dc", "#62d964"],
    ["bird", "#3aa0f0", "#0f56bd"],
  ];
  return (
    <svg width="0" height="0" className="absolute">
      <defs>
        {defs.map(([id, a, b]) => (
          <linearGradient key={id} id={id} x1="0" y1="0" x2="1" y2={id === "edge" ? ".2" : "1"}>
            <stop offset="0" stopColor={a} /><stop offset="1" stopColor={b} />
          </linearGradient>
        ))}
      </defs>
    </svg>
  );
}

export default function App() {
  return (
    <div className="relative flex h-[1080px] w-[1920px] flex-col overflow-hidden bg-white font-['Open_Sans',sans-serif]">
      <Gradients />
      <TitleBar />
      <NavBar />
      <Toolbar />
      <div className="flex min-h-0 flex-1">
        <Sidebar />
        <div className="flex flex-1 justify-center pt-[14px] text-[11.7px] tracking-[-0.22px] text-[#6d6d6d]">Ten folder jest pusty.</div>
        <div className="flex w-[276px] shrink-0 items-center justify-center border-l border-[#f2f2f2] pl-px text-[11.7px] tracking-[-0.11px] text-[#6d6d6d]">Wybierz plik do podglądu.</div>
      </div>
      <StatusBar />
      <Taskbar />
      <Dialog />
    </div>
  );
}
